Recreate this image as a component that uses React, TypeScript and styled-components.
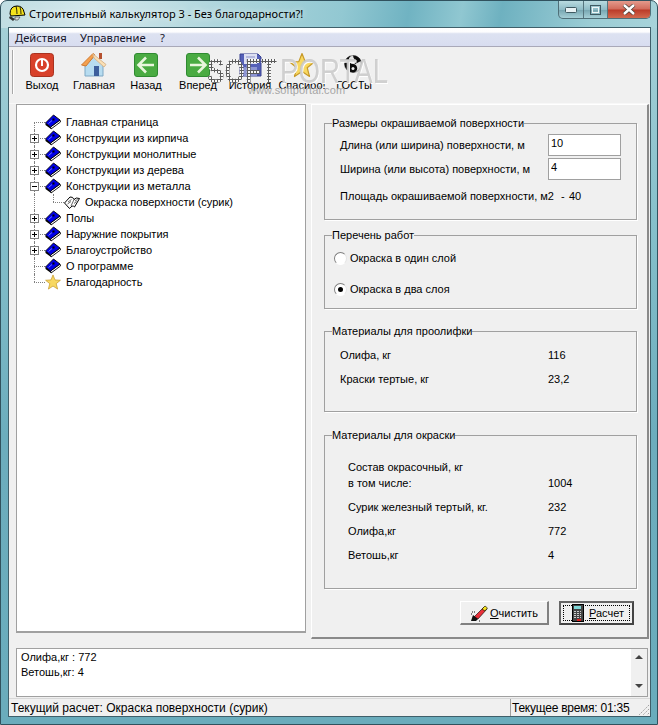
import React from "react";
import styled, { createGlobalStyle } from "styled-components";

const Global = createGlobalStyle`
  html, body { margin: 0; padding: 0; background: #fff; }
  #root { width: 658px; height: 725px; overflow: hidden; }
  * { box-sizing: border-box; }
`;

const UI = `"Liberation Sans", Arial, sans-serif`;
const SEGOE = `"Noto Sans", "Open Sans", sans-serif`;

const Window = styled.div`
  width: 658px;
  height: 725px;
  display: flex;
  flex-direction: column;
  padding: 0 7px 7px 7px;
  border: 1px solid #31525e;
  border-radius: 7px 7px 0 0;
  font: 11px ${UI};
  color: #000;
  background:
    linear-gradient(100deg, #c0dde2 0%, #d4e8ec 14%, #add5dc 34%, #92c8d2 52%, #70b3c2 62%, #90c7d1 70%, #6eb1c0 76%, #9ccdd5 90%, #a7d3da 100%) 0 0 / 100% 27px no-repeat,
    linear-gradient(180deg, #a9d2d9 0, #86c0cb 30%, #6cadbd 60%, #6aacbc 100%);
`;

const TitleBar = styled.div`
  height: 26px;
  flex: none;
  display: flex;
  align-items: flex-start;
  margin: 0 -1px 0 -7px;
  padding-left: 7px;
`;

const AppIcon = styled.svg`
  width: 18px;
  height: 18px;
  margin-top: 3px;
  flex: none;
`;

const TitleText = styled.div`
  margin: 4px 0 0 3px;
  font: 11px/18px ${SEGOE};
  color: #000;
  text-shadow: 0 0 6px rgba(255,255,255,.9);
`;

const CaptionButtons = styled.div`
  margin-left: auto;
  display: flex;
  height: 18px;
  border: 1px solid #4f6f78;
  border-top: 0;
  border-radius: 0 0 5px 5px;
  overflow: hidden;
  background: linear-gradient(180deg, #b9dbe0 0, #8fbcc6 50%, #79a8b3 55%, #a5cfd6 100%);
`;

const CaptionButton = styled.div<{ $w: number; $close?: boolean }>`
  width: ${(p) => p.$w}px;
  display: flex;
  align-items: center;
  justify-content: center;
  border-right: ${(p) => (p.$close ? "0" : "1px solid #56757e")};
  ${(p) => p.$close && "background: linear-gradient(180deg, #e49a8c 0, #d16b5b 48%, #bb3a28 52%, #d26a4f 100%);"}
`;

const Client = styled.div`
  flex: 1;
  min-height: 0;
  display: flex;
  flex-direction: column;
  background: #f0f0f0;
  border: 1px solid #3f5f6a;
  margin-right: -1px;
`;

const MenuBar = styled.div`
  height: 19px;
  flex: none;
  display: flex;
  align-items: center;
  padding: 1px 0 0 6px;
  background: linear-gradient(180deg, #fff 0, #fdfdfe 22%, #dde2f1 32%, #d8ddf0 100%);
  border-bottom: 1px solid #a9a9b8;
  font: 11.2px ${SEGOE};
  color: #15152a;
`;

const MenuItem = styled.span<{ $w: number }>`
  width: ${(p) => p.$w}px;
`;

const Toolbar = styled.div`
  position: relative;
  height: 57px;
  flex: none;
  display: flex;
  padding-left: 3px;
  border-bottom: 1px solid #f8f8f8;
`;

const Grip = styled.div`
  width: 1px;
  height: 44px;
  margin-top: 3px;
  background: #a8a8a8;
  box-shadow: 1px 0 0 #fff;
  margin-right: 3px;
`;

const ToolButton = styled.div`
  width: 52px;
  flex: none;
  display: flex;
  flex-direction: column;
  align-items: center;
  padding-top: 5px;
`;

const ToolIcon = styled.svg`
  width: 26px;
  height: 26px;
  flex: none;
`;

const ToolLabel = styled.span`
  font: 11px/14px ${UI};
  white-space: nowrap;
  color: #000;
`;

const Watermark = styled.div`
  position: absolute;
  left: 198px;
  top: 7px;
  width: 200px;
  height: 48px;
  pointer-events: none;
`;

const WmSoft = styled.span`
  position: absolute;
  left: 0;
  top: 0;
  font: bold 35px/34px ${UI};
  color: transparent;
  transform: scaleX(0.75);
  transform-origin: 0 0;
  background-image: radial-gradient(ellipse 1.8px 1.3px at center, #5c5c5c 92%, #f8f8f8 100%);
  background-size: 4px 3px;
  -webkit-background-clip: text;
  background-clip: text;
`;

const WmPortal = styled.span`
  position: absolute;
  left: 73px;
  top: 0;
  font: 35px/34px ${UI};
  color: rgba(196,196,196,.8);
  text-shadow: 1px 1px 0 #fff;
  transform: scaleX(0.79);
  transform-origin: 0 0;
`;

const WmUrl = styled.span`
  position: absolute;
  left: 41px;
  top: 30px;
  font: 11px/12px ${UI};
  color: #a6a6a6;
  letter-spacing: 0.1px;
`;

const Main = styled.div`
  height: 535px;
  flex: none;
  display: flex;
  padding-left: 7px;
`;

const Tree = styled.div`
  width: 290px;
  height: 529px;
  background: #fff;
  border: 1px solid #a0a0a0;
  border-bottom-width: 2px;
  padding: 9px 0 0 9px;
  flex: none;
  font: 11px ${UI};
`;

const TreeRow = styled.div`
  height: 16px;
  display: flex;
  align-items: center;
  white-space: nowrap;
  color: #000;
`;

const Connector = styled.span<{ $up?: boolean; $down?: boolean; $across?: boolean }>`
  position: relative;
  width: 19px;
  height: 16px;
  flex: none;
  &::before {
    content: "";
    position: absolute;
    left: 8px;
    top: ${(p) => (p.$up ? "0" : "8px")};
    bottom: ${(p) => (p.$down ? "0" : "8px")};
    border-left: 1px dotted #808080;
  }
  &::after {
    content: "";
    position: absolute;
    left: 8px;
    right: 0;
    top: 8px;
    border-top: ${(p) => (p.$across ? "1px dotted #808080" : "0")};
  }
`;

const Expander = styled.span<{ $open?: boolean }>`
  position: absolute;
  z-index: 1;
  left: 4px;
  top: 4px;
  width: 9px;
  height: 9px;
  border: 1px solid #808080;
  background-color: #fff;
  background-repeat: no-repeat;
  background-image:
    linear-gradient(#000, #000)
    ${(p) => (p.$open ? "" : ", linear-gradient(#000, #000)")};
  background-size: 5px 1px ${(p) => (p.$open ? "" : ", 1px 5px")};
  background-position: 1px 3px ${(p) => (p.$open ? "" : ", 3px 1px")};
`;

const TreeIcon = styled.svg`
  width: 16px;
  height: 16px;
  flex: none;
  margin-right: 5px;
`;

const Panel = styled.div`
  width: 338px;
  height: 535px;
  margin-left: 5px;
  flex: none;
  display: flex;
  flex-direction: column;
  align-items: flex-start;
  padding: 18px 0 0 12px;
  border-top: 1px solid #fff;
  border-left: 1px solid #fff;
  border-right: 2px solid #8a8a8a;
  border-bottom: 2px solid #8a8a8a;
`;

const Group = styled.div<{ $h: number; $top: number }>`
  width: 313px;
  height: ${(p) => p.$h}px;
  margin-top: ${(p) => p.$top}px;
  flex: none;
  border: 1px solid #a0a0a0;
  box-shadow: 1px 1px 0 #fff;
`;

const Legend = styled.div`
  display: table;
  height: 14px;
  margin: -8px 0 0 7px;
  background: #f0f0f0;
  font: 11px/14px ${UI};
  color: #000;
`;

const FieldRow = styled.div<{ $h: number; $top?: number; $left?: number }>`
  height: ${(p) => p.$h}px;
  margin-top: ${(p) => p.$top ?? 0}px;
  padding-left: ${(p) => p.$left ?? 15}px;
  display: flex;
  align-items: center;
  font: 11px ${UI};
  color: #000;
  white-space: nowrap;
`;

const FieldLabel = styled.span<{ $w: number }>`
  width: ${(p) => p.$w}px;
  flex: none;
`;

const Field = styled.input`
  width: 73px;
  height: 22px;
  flex: none;
  padding: 0 0 5px 2px;
  border: 1px solid #a0a0a0;
  background: #fff;
  font: 11px ${UI};
  color: #000;
  outline: none;
`;

const Radio = styled.span<{ $on?: boolean }>`
  width: 13px;
  height: 13px;
  flex: none;
  margin: 0 3px 0 -6px;
  border-radius: 50%;
  border: 1px solid;
  border-color: #808080 #e4e4e4 #fff #808080;
  display: flex;
  align-items: center;
  justify-content: center;
  background: #fff;
  &::after {
    content: "";
    width: 5px;
    height: 5px;
    border-radius: 50%;
    background: ${(p) => (p.$on ? "#000" : "transparent")};
  }
`;

const ButtonRow = styled.div`
  width: 313px;
  flex: none;
  margin-top: 12px;
  display: flex;
  gap: 10px;
  padding-left: 136px;
`;

const Btn = styled.div<{ $w: number; $default?: boolean }>`
  width: ${(p) => p.$w}px;
  height: 24px;
  flex: none;
  display: flex;
  align-items: center;
  font: 11px ${UI};
  color: #000;
  background: #f0f0f0;
  ${(p) =>
    p.$default
      ? `border: 2px solid #555; padding: 2px; border-color:#666 #444 #444 #666;`
      : `border-style: solid; border-width: 1px 2px 2px 1px; border-color:#fff #808080 #808080 #fff;`}
`;

const BtnInner = styled.div<{ $focus?: boolean; $pad: number }>`
  flex: 1;
  height: 100%;
  display: flex;
  align-items: center;
  gap: 2px;
  padding-left: ${(p) => p.$pad}px;
  border: ${(p) => (p.$focus ? "1px dotted #000" : "0")};
`;

const BtnIcon = styled.svg`
  width: 18px;
  height: 18px;
  flex: none;
`;

const Memo = styled.div`
  width: 632px;
  height: 49px;
  margin: 9px 0 0 7px;
  flex: none;
  display: flex;
  border: 1px solid #a0a0a0;
  background: #fff;
  font: 11px/14.5px ${UI};
  color: #000;
`;

const MemoText = styled.div`
  flex: 1;
  padding: 1px 0 0 4px;
`;

const ScrollBar = styled.div`
  width: 16px;
  flex: none;
  background: #f0f0f0;
  display: flex;
  flex-direction: column;
  justify-content: space-between;
  align-items: center;
  padding: 6px 0 8px;
`;

const Arrow = styled.span<{ $up?: boolean }>`
  width: 0;
  height: 0;
  border-left: 4px solid transparent;
  border-right: 4px solid transparent;
  ${(p) => (p.$up ? "border-bottom: 4px solid #444;" : "border-top: 4px solid #444;")}
`;

const StatusBar = styled.div`
  flex: 1;
  min-height: 0;
  margin-top: 1px;
  display: flex;
  font: 12px ${UI};
  color: #000;
  border-top: 1px solid #d8d8d8;
`;

const StatusCell = styled.div<{ $w?: number }>`
  ${(p) => (p.$w ? `width:${p.$w}px; flex:none;` : "flex:1;")}
  display: flex;
  align-items: center;
  padding-left: ${(p) => (p.$w ? "2px" : "1px")};
  white-space: nowrap;
  border-right: ${(p) => (p.$w ? "1px solid #a0a0a0" : "0")};
`;

const StatusClock = styled.span`
  letter-spacing: -0.25px;
`;

const ResizeGrip = styled.svg`
  width: 12px;
  height: 12px;
  margin: auto 0 0 auto;
  flex: none;
`;

const Book = () => (
  <TreeIcon viewBox="0 0 16 16">
    <polygon points="0.5,9 5.5,13 6,15 0.5,11" fill="#000" />
    <polygon points="5.5,13 15,6 15.5,8 6,15" fill="#fff" stroke="#000" strokeWidth="0.9" />
    <polygon points="0.5,9 8.5,1 15,6 5.5,13" fill="#0000e6" stroke="#000" strokeWidth="0.9" />
    <rect x="7.5" y="4.5" width="2" height="2" fill="#000" />
    <path d="M3.5 9.5 L7 6.5" stroke="#8f9cff" strokeWidth="0.8" />
  </TreeIcon>
);

const OpenBook = () => (
  <TreeIcon viewBox="0 0 16 16">
    <path d="M0.5 9 L6 3 Q9 2.5 10 5.5 Q12 3 15.5 4.5 L10.5 13 Q8.5 10.5 5.5 14.5 Z" fill="#fff" stroke="#000" />
    <path d="M10 5.5 L7 12 M4 8 L7.5 5.5 M3.5 10 L7 7.5 M11 7 L13.5 5.5 M10 9.5 L12.5 7.5" fill="none" stroke="#000" strokeWidth="0.6" />
  </TreeIcon>
);

const StarShape = () => (
  <path
    d="M13 1.5 L16.2 9.6 L25 10.2 L18.2 15.7 L20.5 24.5 L13 19.6 L5.5 24.5 L7.8 15.7 L1 10.2 L9.8 9.6 Z"
    fill="#f8d860"
    stroke="#c79a2a"
    strokeWidth="1.2"
    strokeLinejoin="round"
  />
);

const tools: { label: string; icon: React.ReactNode }[] = [
  {
    label: "Выход",
    icon: (
      <>
        <rect x="1.5" y="1.5" width="23" height="23" rx="3" fill="#d8412a" stroke="#a93220" />
        <circle cx="13" cy="13" r="6" fill="none" stroke="#fff" strokeWidth="2.2" />
        <rect x="12" y="8" width="2" height="6" fill="#fff" />
      </>
    ),
  },
  {
    label: "Главная",
    icon: (
      <>
        <rect x="18" y="1" width="3" height="6" fill="#b5502f" />
        <path d="M4 13 L13 5 L22 13 V24 H4 Z" fill="#b7dcf0" stroke="#7fa8c4" />
        <path d="M0.5 13 L12 1.5 L14 3 L5 14 Z" fill="#f4a04e" stroke="#d07a30" />
        <path d="M12 2 L25 12.5 L23 15 L13 6 Z" fill="#fbe0b5" stroke="#d9b890" />
        <rect x="13" y="14" width="5" height="10" fill="#3d5f9c" />
      </>
    ),
  },
  {
    label: "Назад",
    icon: (
      <>
        <rect x="1.5" y="1.5" width="23" height="23" rx="2.5" fill="#4aab42" stroke="#2f8a31" />
        <path d="M5 13 H21 M13 5.5 L5.5 13 L13 20.5" fill="none" stroke="#e9f6dd" strokeWidth="2.6" />
      </>
    ),
  },
  {
    label: "Вперед",
    icon: (
      <>
        <rect x="1.5" y="1.5" width="23" height="23" rx="2.5" fill="#4aab42" stroke="#2f8a31" />
        <path d="M21 13 H5 M13 5.5 L20.5 13 L13 20.5" fill="none" stroke="#e9f6dd" strokeWidth="2.6" />
      </>
    ),
  },
  {
    label: "История",
    icon: (
      <>
        <path d="M3 2 H21 L24 5 V24 H3 Z" fill="#5560b8" stroke="#3a4392" />
        <rect x="7" y="2" width="13" height="10" fill="#dde0f2" />
        <path d="M9 5 H18 M9 8 H18" stroke="#8a90c8" />
        <rect x="7" y="15" width="13" height="9" fill="#8d95d2" />
      </>
    ),
  },
  { label: "Спасибо!", icon: <StarShape /> },
  {
    label: "ГОСТы",
    icon: (
      <>
        <circle cx="12" cy="12" r="8.5" fill="#e4e4e4" stroke="#777" strokeWidth="0.8" />
        <path d="M12 3.5 A8.5 8.5 0 0 0 12 20.5 A4.25 4.25 0 0 0 12 12 A4.25 4.25 0 0 1 12 3.5 Z" fill="#0c0c0c" />
        <path d="M12 3.5 A8.5 8.5 0 0 1 20 9 L14 12 Z" fill="#0c0c0c" />
        <circle cx="12" cy="7.5" r="1.5" fill="#eee" />
        <circle cx="12" cy="16.5" r="1.5" fill="#eee" />
      </>
    ),
  },
];

type Node = { label: string; kind: "book" | "open" | "star"; exp?: "plus" | "minus"; child?: boolean };

const nodes: Node[] = [
  { label: "Главная страница", kind: "book" },
  { label: "Конструкции из кирпича", kind: "book", exp: "plus" },
  { label: "Конструкции монолитные", kind: "book", exp: "plus" },
  { label: "Конструкции из дерева", kind: "book", exp: "plus" },
  { label: "Конструкции из металла", kind: "book", exp: "minus" },
  { label: "Окраска поверхности (сурик)", kind: "open", child: true },
  { label: "Полы", kind: "book", exp: "plus" },
  { label: "Наружние покрытия", kind: "book", exp: "plus" },
  { label: "Благоустройство", kind: "book", exp: "plus" },
  { label: "О программе", kind: "book" },
  { label: "Благодарность", kind: "star" },
];

const TreeView = () => (
  <Tree>
    {nodes.map((n, i) => (
      <TreeRow key={n.label}>
        {n.child ? (
          <>
            <Connector $up $down />
            <Connector $up $across />
          </>
        ) : (
          <Connector $up={i > 0} $down={i < nodes.length - 1} $across>
            {n.exp && <Expander $open={n.exp === "minus"} />}
          </Connector>
        )}
        {n.kind === "book" && <Book />}
        {n.kind === "open" && <OpenBook />}
        {n.kind === "star" && (
          <TreeIcon viewBox="0 0 26 26">
            <StarShape />
          </TreeIcon>
        )}
        {n.label}
      </TreeRow>
    ))}
  </Tree>
);

export default function App() {
  return (
    <Window>
      <Global />
      <TitleBar>
        <AppIcon viewBox="0 0 18 18">
          <path d="M2 10 Q2 2 9 2 Q15 2 16 8 L17 11 L3 12 Z" fill="#f4e21c" stroke="#000" />
          <path d="M8 2 Q9 6 9 10 M12 3 Q13 6 13 10" fill="none" stroke="#000" strokeWidth="0.8" />
          <path d="M2 12 L7 15 L5 17 L1 14 Z" fill="#333" />
          <path d="M7 13 L12 13 L10 16 L7 16 Z" fill="#ddd" stroke="#333" strokeWidth="0.6" />
        </AppIcon>
        <TitleText>Строительный калькулятор 3 - Без благодарности?!</TitleText>
        <CaptionButtons>
          <CaptionButton $w={25}>
            <svg width="12" height="6" viewBox="0 0 12 6">
              <rect x="0.5" y="0.5" width="11" height="5" rx="1" fill="#e8f2f4" stroke="#3f5a62" />
            </svg>
          </CaptionButton>
          <CaptionButton $w={24}>
            <svg width="11" height="10" viewBox="0 0 11 10">
              <rect x="0.5" y="0.5" width="10" height="9" fill="none" stroke="#3f5a62" />
              <rect x="2.5" y="2.5" width="6" height="5" fill="none" stroke="#eef6f7" />
            </svg>
          </CaptionButton>
          <CaptionButton $w={42} $close>
            <svg width="16" height="11" viewBox="0 0 16 11">
              <path d="M3 1 L13 10 M13 1 L3 10" stroke="#4b4038" strokeWidth="4" />
              <path d="M3 1 L13 10 M13 1 L3 10" stroke="#fff" strokeWidth="2.4" />
            </svg>
          </CaptionButton>
        </CaptionButtons>
      </TitleBar>
      <Client>
        <MenuBar>
          <MenuItem $w={65}>Действия</MenuItem>
          <MenuItem $w={80}>Управление</MenuItem>
          <MenuItem $w={20}>?</MenuItem>
        </MenuBar>
        <Toolbar>
          <Grip />
          {tools.map((t) => (
            <ToolButton key={t.label}>
              <ToolIcon viewBox="0 0 26 26">{t.icon}</ToolIcon>
              <ToolLabel>{t.label}</ToolLabel>
            </ToolButton>
          ))}
          <Watermark>
            <WmSoft>SOFT</WmSoft>
            <WmPortal>PORTAL</WmPortal>
            <WmUrl>www.softportal.com</WmUrl>
          </Watermark>
        </Toolbar>
        <Main>
          <TreeView />
          <Panel>
            <Group $h={97} $top={0}>
              <Legend>Размеры окрашиваемой поверхности</Legend>
              <FieldRow $h={22} $top={4}>
                <FieldLabel $w={208}>Длина (или ширина) поверхности, м</FieldLabel>
                <Field readOnly value="10" />
              </FieldRow>
              <FieldRow $h={22} $top={2}>
                <FieldLabel $w={208}>Ширина (или высота) поверхности, м</FieldLabel>
                <Field readOnly value="4" />
              </FieldRow>
              <FieldRow $h={22} $top={5}>
                <FieldLabel $w={221}>Площадь окрашиваемой поверхности, м2</FieldLabel>
                <FieldLabel $w={8}>-</FieldLabel>
                40
              </FieldRow>
            </Group>
            <Group $h={74} $top={15}>
              <Legend>Перечень работ</Legend>
              <FieldRow $h={22} $top={5}>
                <Radio />
                Окраска в один слой
              </FieldRow>
              <FieldRow $h={22} $top={9}>
                <Radio $on />
                Окраска в два слоя
              </FieldRow>
            </Group>
            <Group $h={81} $top={22}>
              <Legend>Материалы для проолифки</Legend>
              <FieldRow $h={24} $top={5}>
                <FieldLabel $w={208}>Олифа, кг</FieldLabel>116
              </FieldRow>
              <FieldRow $h={24}>
                <FieldLabel $w={208}>Краски тертые, кг</FieldLabel>23,2
              </FieldRow>
            </Group>
            <Group $h={154} $top={23}>
              <Legend>Материалы для окраски</Legend>
              <FieldRow $h={16} $top={17} $left={23}>
                Состав окрасочный, кг
              </FieldRow>
              <FieldRow $h={16} $left={23}>
                <FieldLabel $w={200}>в том числе:</FieldLabel>1004
              </FieldRow>
              <FieldRow $h={24} $top={4} $left={23}>
                <FieldLabel $w={200}>Сурик железный тертый, кг.</FieldLabel>232
              </FieldRow>
              <FieldRow $h={24} $left={23}>
                <FieldLabel $w={200}>Олифа,кг</FieldLabel>772
              </FieldRow>
              <FieldRow $h={24} $left={23}>
                <FieldLabel $w={200}>Ветошь,кг</FieldLabel>4
              </FieldRow>
            </Group>
            <ButtonRow>
              <Btn $w={89}>
                <BtnInner $pad={9}>
                  <BtnIcon viewBox="0 0 18 18">
                    <path d="M4 13 L14 3 L17 5 L8 15 Z" fill="#e8303a" stroke="#000" strokeWidth="0.6" />
                    <path d="M12 5 L15 2 L17.5 4 L15 7 Z" fill="#f6e21e" stroke="#000" strokeWidth="0.6" />
                    <path d="M1 17 L3 11 L8 15 L6 17 Z" fill="#111" />
                    <path d="M1 10 h1 M4 8 h1 M9 17 h1 M2 8 h1" stroke="#111" />
                  </BtnIcon>
                  <span>
                    <u>О</u>чистить
                  </span>
                </BtnInner>
              </Btn>
              <Btn $w={75} $default>
                <BtnInner $focus $pad={5}>
                  <BtnIcon viewBox="0 0 18 18" shapeRendering="crispEdges">
                    <rect x="3" y="0.5" width="11" height="17" fill="#444" stroke="#000" />
                    <rect x="5" y="2" width="7" height="3" fill="#7fd8d8" />
                    <path d="M5 7h2M8 7h2M11 7h1M5 9h2M8 9h2M11 9h1M5 11h2M8 11h2M11 11h1M5 13h2M8 13h2M11 13h1" stroke="#ccc" />
                    <rect x="8" y="15" width="4" height="2" fill="#e02020" />
                  </BtnIcon>
                  <span>
                    <u>Р</u>асчет
                  </span>
                </BtnInner>
              </Btn>
            </ButtonRow>
          </Panel>
        </Main>
        <Memo>
          <MemoText>
            Олифа,кг : 772
            <br />
            Ветошь,кг: 4
          </MemoText>
          <ScrollBar>
            <Arrow $up />
            <Arrow />
          </ScrollBar>
        </Memo>
        <StatusBar>
          <StatusCell $w={502}>Текущий расчет: Окраска поверхности (сурик)</StatusCell>
          <StatusCell>
            <StatusClock>Текущее время: 01:35</StatusClock>
            <ResizeGrip viewBox="0 0 12 12">
              <path d="M11 1 L1 11 M11 5 L5 11 M11 9 L9 11" stroke="#a0a0a0" strokeWidth="1" strokeDasharray="1.5 1" />
            </ResizeGrip>
          </StatusCell>
        </StatusBar>
      </Client>
    </Window>
  );
}
